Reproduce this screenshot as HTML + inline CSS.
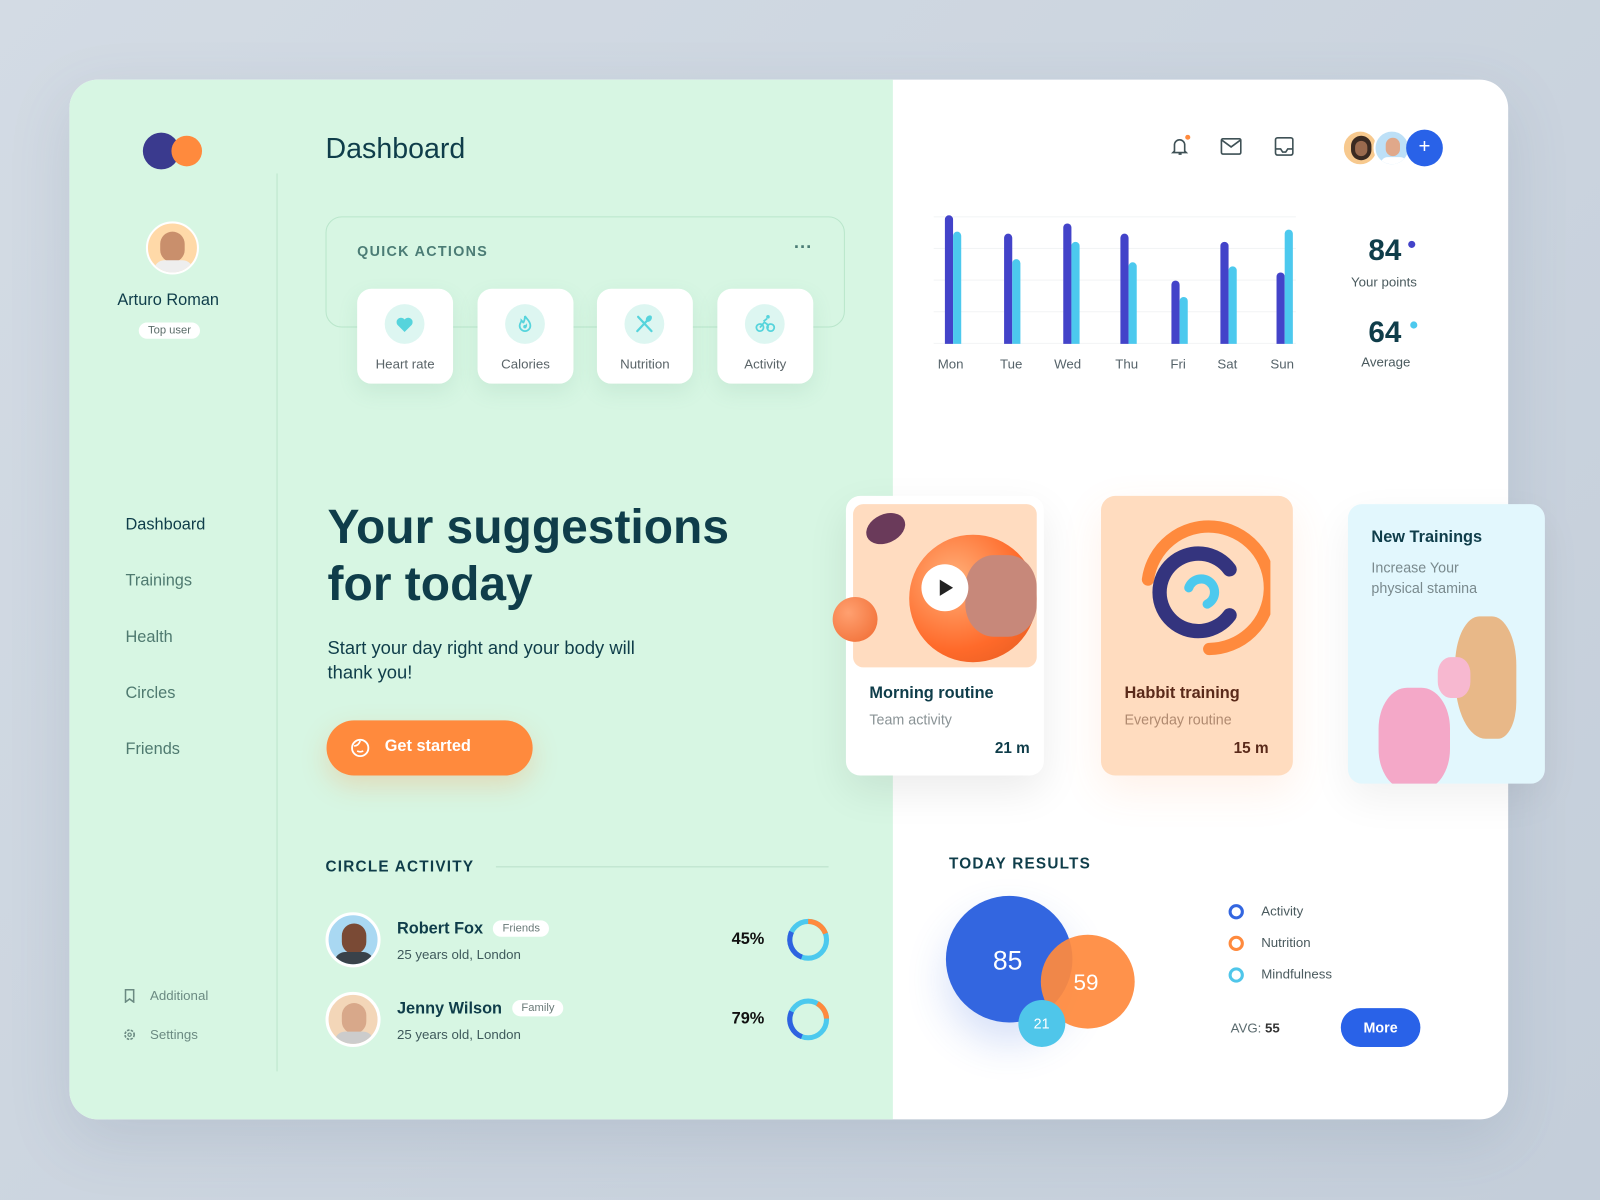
<!DOCTYPE html>
<html><head><meta charset="utf-8"><style>
*{margin:0;padding:0;box-sizing:border-box}
body{width:1600px;height:1200px;overflow:hidden;background:linear-gradient(135deg,#d3dbe4,#c4ceda);font-family:"Liberation Sans",sans-serif}
#w{position:absolute;left:0;top:0;width:1568px;height:1176px;transform:scale(1.020408);transform-origin:0 0}
.a{position:absolute}
.card{left:68px;top:78px;width:1410px;height:1019px;border-radius:28px;overflow:hidden;background:#fff;box-shadow:0 20px 60px rgba(80,100,130,.15)}
.green{left:0;top:0;width:807px;height:1019px;background:#d7f6e3}
.t{position:absolute;white-space:nowrap;color:#0f3d4a}
.nav{font-size:16px;color:#4f7a70}
.tile{position:absolute;top:283px;width:94px;height:93px;background:#fff;border-radius:14px;box-shadow:0 8px 20px rgba(90,160,120,.12)}
.tile .ic{position:absolute;left:27px;top:15px;width:39px;height:39px;border-radius:50%;background:#ddf6f1}
.tile .ic svg{position:absolute;left:9px;top:9px}
.tile span{position:absolute;left:0;right:0;top:66px;text-align:center;font-size:13px;color:#5a6468}
.bar{position:absolute;width:8px;border-radius:4px 4px 0 0;bottom:839px}
.lbl{position:absolute;top:349px;font-size:13px;color:#56636a}
.tag{display:inline-block;font-size:11px;color:#6a7a78;background:#fff;border-radius:9px;padding:2px 9px;margin-left:10px;vertical-align:2px;font-weight:normal}
</style></head><body><div id="w">
<div class="a card">
<div class="a green"></div>
</div>
<!-- logo -->
<div class="a" style="left:140px;top:130px;width:36px;height:36px;border-radius:50%;background:#3a3a8e"></div>
<div class="a" style="left:168px;top:133px;width:30px;height:30px;border-radius:50%;background:#ff8a3d"></div>
<!-- user -->
<div class="a" style="left:143px;top:217px;width:52px;height:52px;border-radius:50%;background:#ffd9a8;border:2px solid #fff;overflow:hidden"><div class="a" style="left:12px;top:8px;width:24px;height:30px;border-radius:12px;background:#c98f6c"></div><div class="a" style="left:6px;top:36px;width:38px;height:20px;border-radius:12px;background:#eee"></div></div>
<div class="t" style="left:115px;top:286px;font-size:16px">Arturo Roman</div>
<div class="t" style="left:136px;top:316px;font-size:11px;background:#fff;border-radius:9px;padding:2px 9px;color:#5c6d6a">Top user</div>
<div class="a" style="left:271px;top:170px;width:1px;height:880px;background:#bde5cd"></div>
<div class="t nav" style="left:123px;top:506px;color:#0f3d4a">Dashboard</div>
<div class="t nav" style="left:123px;top:561px">Trainings</div>
<div class="t nav" style="left:123px;top:616px">Health</div>
<div class="t nav" style="left:123px;top:671px">Circles</div>
<div class="t nav" style="left:123px;top:726px">Friends</div>
<svg class="a" style="left:121px;top:969px" width="12" height="14" viewBox="0 0 12 14"><path d="M2 1h8v12l-4-3-4 3z" fill="none" stroke="#6b8a82" stroke-width="1.5"/></svg>
<div class="t" style="left:147px;top:968px;font-size:13px;color:#6b8a82">Additional</div>
<svg class="a" style="left:120px;top:1007px" width="14" height="14" viewBox="0 0 14 14"><circle cx="7" cy="7" r="4.5" fill="none" stroke="#6b8a82" stroke-width="1.6" stroke-dasharray="2.5 1.2"/><circle cx="7" cy="7" r="1.6" fill="none" stroke="#6b8a82" stroke-width="1.2"/></svg>
<div class="t" style="left:147px;top:1006px;font-size:13px;color:#6b8a82">Settings</div>
<!-- header -->
<div class="t" style="left:319px;top:130px;font-size:28px">Dashboard</div>
<div class="a" style="left:319px;top:212px;width:509px;height:109px;border:1px solid #b9e6cb;border-radius:16px"></div>
<div class="t" style="left:350px;top:238px;font-size:14px;font-weight:bold;letter-spacing:1.3px;color:#4b7c75">QUICK ACTIONS</div>
<div class="t" style="left:778px;top:232px;font-size:18px;font-weight:bold;color:#4b7c75">···</div>
<div class="tile" style="left:350px"><div class="ic"><svg width="21" height="21" viewBox="0 0 24 24"><path d="M12 21l-8-8a5 5 0 017-7l1 1 1-1a5 5 0 017 7z" fill="#56d4dc"/></svg></div><span>Heart rate</span></div>
<div class="tile" style="left:468px"><div class="ic"><svg width="21" height="21" viewBox="0 0 24 24"><path d="M12 3c1 3 6 5 6 11a6 6 0 01-12 0c0-3 2-4 2-6 1 1 2 2 2 3 1-2 2-5 2-8z" fill="none" stroke="#56d4dc" stroke-width="2"/><path d="M12 17a2 2 0 010-4c1 0 2-1 2-2 1 2 0 6-2 6z" fill="#56d4dc"/></svg></div><span>Calories</span></div>
<div class="tile" style="left:585px"><div class="ic"><svg width="21" height="21" viewBox="0 0 24 24"><path d="M5 4l15 16M19 4l-15 16" stroke="#56d4dc" stroke-width="2.5" stroke-linecap="round"/><ellipse cx="17" cy="6" rx="3" ry="4" fill="#56d4dc" transform="rotate(40 17 6)"/></svg></div><span>Nutrition</span></div>
<div class="tile" style="left:703px"><div class="ic"><svg width="22" height="21" viewBox="0 0 24 24"><circle cx="6" cy="16" r="4" fill="none" stroke="#56d4dc" stroke-width="2"/><circle cx="18" cy="16" r="4" fill="none" stroke="#56d4dc" stroke-width="2"/><path d="M6 16l5-6 4 3v4M10 9l4-3" fill="none" stroke="#56d4dc" stroke-width="2"/><circle cx="15" cy="4" r="2" fill="#56d4dc"/></svg></div><span>Activity</span></div>
<!-- suggestions -->
<div class="t" style="left:321px;top:488px;font-size:47px;font-weight:bold;line-height:56px">Your suggestions<br>for today</div>
<div class="t" style="left:321px;top:623px;font-size:18px;line-height:24px">Start your day right and your body will<br>thank you!</div>
<div class="a" style="left:320px;top:706px;width:202px;height:54px;border-radius:27px;background:#ff8a3d;box-shadow:0 10px 25px rgba(255,138,61,.25)"></div>
<svg class="a" style="left:343px;top:723px" width="20" height="20" viewBox="0 0 20 20"><circle cx="10" cy="10" r="8" fill="none" stroke="#fff" stroke-width="1.8"/><path d="M4 8c3 0 5-2 6-5M7 13c2 1 4 1 6 0" fill="none" stroke="#fff" stroke-width="1.6"/></svg>
<div class="t" style="left:377px;top:723px;font-size:16px;font-weight:bold;color:#fff">Get started</div>
<!-- circle activity -->
<div class="t" style="left:319px;top:841px;font-size:15px;font-weight:bold;letter-spacing:1.2px">CIRCLE ACTIVITY</div>
<div class="a" style="left:486px;top:849px;width:326px;height:1px;background:#b9e0c9"></div>
<div class="a" style="left:319px;top:894px;width:54px;height:54px;border-radius:50%;background:#a9d8f2;border:3px solid #fff;overflow:hidden"><div class="a" style="left:13px;top:8px;width:24px;height:30px;border-radius:12px;background:#7a4a35"></div><div class="a" style="left:6px;top:36px;width:38px;height:20px;border-radius:12px;background:#39424a"></div></div>
<div class="t" style="left:389px;top:902px;font-size:16px;font-weight:bold">Robert Fox<span class="tag">Friends</span></div>
<div class="t" style="left:389px;top:928px;font-size:13px;color:#3f5a5c">25 years old, London</div>
<div class="t" style="left:717px;top:912px;font-size:16px;font-weight:bold;color:#111">45%</div>
<svg class="a" style="left:770px;top:899px" width="44" height="44" viewBox="0 0 44 44"><circle cx="22" cy="22" r="18" fill="none" stroke="#4cc9ee" stroke-width="5"/><circle cx="22" cy="22" r="18" fill="none" stroke="#2f63e0" stroke-width="5" stroke-dasharray="30 200" transform="rotate(110 22 22)"/><circle cx="22" cy="22" r="18" fill="none" stroke="#ff8a3d" stroke-width="5" stroke-dasharray="22 200" transform="rotate(-90 22 22)"/></svg>
<div class="a" style="left:319px;top:972px;width:54px;height:54px;border-radius:50%;background:#f3d6b8;border:3px solid #fff;overflow:hidden"><div class="a" style="left:13px;top:8px;width:24px;height:30px;border-radius:12px;background:#d8a88a"></div><div class="a" style="left:6px;top:36px;width:38px;height:20px;border-radius:12px;background:#ccc"></div></div>
<div class="t" style="left:389px;top:980px;font-size:16px;font-weight:bold">Jenny Wilson<span class="tag">Family</span></div>
<div class="t" style="left:389px;top:1006px;font-size:13px;color:#3f5a5c">25 years old, London</div>
<div class="t" style="left:717px;top:990px;font-size:16px;font-weight:bold;color:#111">79%</div>
<svg class="a" style="left:770px;top:977px" width="44" height="44" viewBox="0 0 44 44"><circle cx="22" cy="22" r="18" fill="none" stroke="#4cc9ee" stroke-width="5"/><circle cx="22" cy="22" r="18" fill="none" stroke="#2f63e0" stroke-width="5" stroke-dasharray="30 200" transform="rotate(110 22 22)"/><circle cx="22" cy="22" r="18" fill="none" stroke="#ff8a3d" stroke-width="5" stroke-dasharray="18 200" transform="rotate(-60 22 22)"/></svg>
<!-- top right icons -->
<svg class="a" style="left:1146px;top:132px" width="22" height="22" viewBox="0 0 22 22"><path d="M5 16V10a5 5 0 0110 0v6l1.5 1.5h-13z M9 19h3" fill="none" stroke="#3f5156" stroke-width="1.6"/><circle cx="18" cy="2.5" r="2.5" fill="#ff8a3d"/></svg>
<svg class="a" style="left:1196px;top:135px" width="21" height="17" viewBox="0 0 21 17"><rect x="1" y="1" width="19" height="15" rx="1.5" fill="none" stroke="#3f5156" stroke-width="1.6"/><path d="M1 2l9.5 7 9.5-7" fill="none" stroke="#3f5156" stroke-width="1.6"/></svg>
<svg class="a" style="left:1249px;top:134px" width="19" height="19" viewBox="0 0 19 19"><rect x="1" y="1" width="17" height="17" rx="2" fill="none" stroke="#3f5156" stroke-width="1.6"/><path d="M1 12h5l2 3h3l2-3h5" fill="none" stroke="#3f5156" stroke-width="1.6"/></svg>
<div class="a" style="left:1315px;top:127px;width:36px;height:36px;border-radius:50%;background:#f7c98e;border:2px solid #fff;overflow:hidden"><div class="a" style="left:7px;top:4px;width:20px;height:24px;border-radius:10px;background:#3a2a22"></div><div class="a" style="left:11px;top:9px;width:12px;height:15px;border-radius:6px;background:#9a6a4e"></div></div>
<div class="a" style="left:1346px;top:127px;width:36px;height:36px;border-radius:50%;background:#bde0f7;border:2px solid #fff;overflow:hidden"><div class="a" style="left:10px;top:6px;width:14px;height:18px;border-radius:7px;background:#e0a88a"></div><div class="a" style="left:5px;top:25px;width:26px;height:14px;border-radius:8px;background:#fff"></div></div>
<div class="a" style="left:1378px;top:127px;width:36px;height:36px;border-radius:50%;background:#2962e8;color:#fff;font-size:20px;text-align:center;line-height:35px">+</div>
<!-- chart -->
<div class="a" style="left:915px;top:212px;width:355px;height:1px;background:#f2f4f5"></div>
<div class="a" style="left:915px;top:243px;width:355px;height:1px;background:#f2f4f5"></div>
<div class="a" style="left:915px;top:274px;width:355px;height:1px;background:#f2f4f5"></div>
<div class="a" style="left:915px;top:305px;width:355px;height:1px;background:#f2f4f5"></div>
<div class="a" style="left:915px;top:336px;width:355px;height:1px;background:#f2f4f5"></div>
<div class="bar" style="left:926px;top:211px;height:126px;background:#4343c9"></div><div class="bar" style="left:934px;top:227px;height:110px;background:#4cc9ee"></div>
<div class="bar" style="left:984px;top:229px;height:108px;background:#4343c9"></div><div class="bar" style="left:992px;top:254px;height:83px;background:#4cc9ee"></div>
<div class="bar" style="left:1042px;top:219px;height:118px;background:#4343c9"></div><div class="bar" style="left:1050px;top:237px;height:100px;background:#4cc9ee"></div>
<div class="bar" style="left:1098px;top:229px;height:108px;background:#4343c9"></div><div class="bar" style="left:1106px;top:257px;height:80px;background:#4cc9ee"></div>
<div class="bar" style="left:1148px;top:275px;height:62px;background:#4343c9"></div><div class="bar" style="left:1156px;top:291px;height:46px;background:#4cc9ee"></div>
<div class="bar" style="left:1196px;top:237px;height:100px;background:#4343c9"></div><div class="bar" style="left:1204px;top:261px;height:76px;background:#4cc9ee"></div>
<div class="bar" style="left:1251px;top:267px;height:70px;background:#4343c9"></div><div class="bar" style="left:1259px;top:225px;height:112px;background:#4cc9ee"></div>
<div class="lbl" style="left:919px">Mon</div><div class="lbl" style="left:980px">Tue</div><div class="lbl" style="left:1033px">Wed</div><div class="lbl" style="left:1093px">Thu</div><div class="lbl" style="left:1147px">Fri</div><div class="lbl" style="left:1193px">Sat</div><div class="lbl" style="left:1245px">Sun</div>
<div class="t" style="left:1341px;top:230px;font-size:29px;font-weight:bold">84</div><div class="a" style="left:1380px;top:236px;width:7px;height:7px;border-radius:50%;background:#4343c9"></div>
<div class="t" style="left:1324px;top:269px;font-size:13px;color:#4a5a5e">Your points</div>
<div class="t" style="left:1341px;top:310px;font-size:29px;font-weight:bold">64</div><div class="a" style="left:1382px;top:315px;width:7px;height:7px;border-radius:50%;background:#4cc9ee"></div>
<div class="t" style="left:1334px;top:347px;font-size:13px;color:#4a5a5e">Average</div>
<!-- cards -->
<div class="a" style="left:829px;top:486px;width:194px;height:274px;background:#fff;border-radius:14px;box-shadow:0 15px 40px rgba(0,0,0,.08)"></div>
<div class="a" style="left:836px;top:494px;width:180px;height:160px;background:#ffdcc0;border-radius:10px;overflow:hidden">
 <div class="a" style="left:55px;top:30px;width:125px;height:125px;border-radius:50%;background:radial-gradient(circle at 35% 35%,#ffb07a,#ff6a2a 60%,#e05a20)"></div>
 <div class="a" style="left:110px;top:50px;width:70px;height:80px;border-radius:40%;background:#c7887a"></div>
 <div class="a" style="left:12px;top:10px;width:40px;height:28px;border-radius:50%;background:#6a3a5a;transform:rotate(-25deg)"></div>
</div>
<div class="a" style="left:816px;top:585px;width:44px;height:44px;border-radius:50%;background:radial-gradient(circle at 35% 35%,#ffa070,#f06a30)"></div>
<div class="a" style="left:903px;top:553px;width:46px;height:46px;border-radius:50%;background:#fff"></div>
<svg class="a" style="left:919px;top:567px" width="16" height="18" viewBox="0 0 16 18"><path d="M2 1l13 8-13 8z" fill="#222"/></svg>
<div class="t" style="left:852px;top:671px;font-size:16px;font-weight:bold">Morning routine</div>
<div class="t" style="left:852px;top:697px;font-size:14px;color:#8a9396">Team activity</div>
<div class="t" style="left:975px;top:725px;font-size:15px;font-weight:bold">21 m</div>
<div class="a" style="left:1079px;top:486px;width:188px;height:274px;background:#ffdcbf;border-radius:14px;box-shadow:0 15px 40px rgba(255,140,70,.12)"></div>
<svg class="a" style="left:1105px;top:508px" width="140" height="140" viewBox="0 0 140 140"><path d="M20 60A60 60 0 1 1 80 128" fill="none" stroke="#ff8a3d" stroke-width="12" stroke-linecap="round"/><path d="M100 50A38 38 0 1 0 100 95" fill="none" stroke="#34347e" stroke-width="14" stroke-linecap="round"/><path d="M60 68A13 13 0 1 1 78 84" fill="none" stroke="#4cc9ee" stroke-width="9" stroke-linecap="round"/></svg>
<div class="t" style="left:1102px;top:671px;font-size:16px;font-weight:bold;color:#5a2a1a">Habbit training</div>
<div class="t" style="left:1102px;top:697px;font-size:14px;color:#b08a70">Everyday routine</div>
<div class="t" style="left:1209px;top:725px;font-size:15px;font-weight:bold;color:#5a2a1a">15 m</div>
<div class="a" style="left:1321px;top:494px;width:193px;height:274px;background:#e2f7fd;border-radius:14px;overflow:hidden;box-shadow:0 15px 40px rgba(0,0,0,.06)">
 <div class="a" style="left:105px;top:110px;width:60px;height:120px;border-radius:40% 40% 30% 50%;background:#e8b888"></div>
 <div class="a" style="left:30px;top:180px;width:70px;height:100px;border-radius:40%;background:#f4a8c8"></div>
 <div class="a" style="left:88px;top:150px;width:32px;height:40px;border-radius:40%;background:#f7b8d0"></div>
</div>
<div class="t" style="left:1344px;top:518px;font-size:16px;font-weight:bold">New Trainings</div>
<div class="t" style="left:1344px;top:546px;font-size:14px;line-height:20px;color:#7a8a8e">Increase Your<br>physical stamina</div>
<!-- today results -->
<div class="t" style="left:930px;top:838px;font-size:15px;font-weight:bold;letter-spacing:1.2px">TODAY RESULTS</div>
<div class="a" style="left:927px;top:878px;width:124px;height:124px;border-radius:50%;background:#3366e0;box-shadow:0 20px 40px rgba(50,100,220,.2)"></div>
<div class="a" style="left:1020px;top:916px;width:92px;height:92px;border-radius:50%;background:rgba(255,138,61,.93)"></div>
<div class="a" style="left:998px;top:980px;width:46px;height:46px;border-radius:50%;background:#4fc6ea"></div>
<div class="t" style="left:973px;top:926px;font-size:26px;color:#fff">85</div>
<div class="t" style="left:1052px;top:950px;font-size:22px;color:#fff">59</div>
<div class="t" style="left:1013px;top:995px;font-size:14px;color:#fff">21</div>
<div class="a" style="left:1204px;top:886px;width:15px;height:15px;border-radius:50%;border:3.5px solid #3366e0"></div>
<div class="t" style="left:1236px;top:885px;font-size:13px;color:#4a5a5e">Activity</div>
<div class="a" style="left:1204px;top:917px;width:15px;height:15px;border-radius:50%;border:3.5px solid #ff8a3d"></div>
<div class="t" style="left:1236px;top:916px;font-size:13px;color:#4a5a5e">Nutrition</div>
<div class="a" style="left:1204px;top:948px;width:15px;height:15px;border-radius:50%;border:3.5px solid #4fc6ea"></div>
<div class="t" style="left:1236px;top:947px;font-size:13px;color:#4a5a5e">Mindfulness</div>
<div class="t" style="left:1206px;top:1000px;font-size:13px;color:#5a6a6e">AVG: <b style="color:#333">55</b></div>
<div class="a" style="left:1314px;top:988px;width:78px;height:38px;border-radius:19px;background:#2962e8;color:#fff;font-weight:bold;font-size:14px;text-align:center;line-height:38px">More</div>
</div></body></html>
